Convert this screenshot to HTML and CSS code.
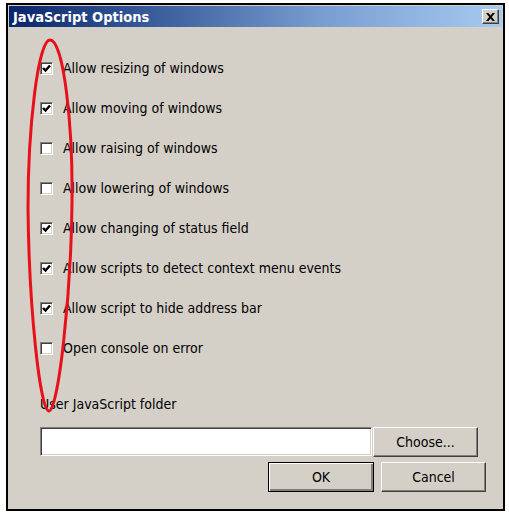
FILE: index.html
```html
<!DOCTYPE html>
<html lang="en">
<head>
  <meta charset="UTF-8">
  <title>JavaScript Options</title>
  <link rel="stylesheet" href="styles.css">
</head>
<body>

  <div class="dialog">
    <div class="titlebar">
      <span class="title">JavaScript Options</span>
      <button class="close" aria-label="Close">
        <svg width="9" height="8" viewBox="0 0 9 8">
          <path d="M0 0h2.5l2 2.6L6.5 0H9L5.8 4 9 8H6.5l-2-2.6L2.5 8H0l3.2-4z" fill="#000"/>
        </svg>
      </button>
    </div>

    <div class="content">
      <div class="options">
        <label class="option"><span class="box"><svg class="tick" width="9" height="9" viewBox="0 0 9 9"><path d="M1 4l2.5 2.5L8 1.5" fill="none" stroke="#000" stroke-width="2.4"/></svg></span>Allow resizing of windows</label>
        <label class="option"><span class="box"><svg class="tick" width="9" height="9" viewBox="0 0 9 9"><path d="M1 4l2.5 2.5L8 1.5" fill="none" stroke="#000" stroke-width="2.4"/></svg></span>Allow moving of windows</label>
        <label class="option"><span class="box"></span>Allow raising of windows</label>
        <label class="option"><span class="box"></span>Allow lowering of windows</label>
        <label class="option"><span class="box"><svg class="tick" width="9" height="9" viewBox="0 0 9 9"><path d="M1 4l2.5 2.5L8 1.5" fill="none" stroke="#000" stroke-width="2.4"/></svg></span>Allow changing of status field</label>
        <label class="option"><span class="box"><svg class="tick" width="9" height="9" viewBox="0 0 9 9"><path d="M1 4l2.5 2.5L8 1.5" fill="none" stroke="#000" stroke-width="2.4"/></svg></span>Allow scripts to detect context menu events</label>
        <label class="option"><span class="box"><svg class="tick" width="9" height="9" viewBox="0 0 9 9"><path d="M1 4l2.5 2.5L8 1.5" fill="none" stroke="#000" stroke-width="2.4"/></svg></span>Allow script to hide address bar</label>
        <label class="option"><span class="box"></span>Open console on error</label>
      </div>

      <div class="folder-label">User JavaScript folder</div>
      <div class="folder-row">
        <div class="field"></div>
        <button class="btn choose">Choose...</button>
      </div>

      <div class="actions">
        <button class="btn default">OK</button>
        <button class="btn">Cancel</button>
      </div>
    </div>

    <!-- red marker drawn over the checkbox column -->
    <svg class="marker" width="80" height="400" viewBox="0 0 80 400">
      <path d="M42 2 C56 2 65 90 64 165 C63 260 50 373 41 373 C32 373 21 270 20 170 C20 90 30 2 42 2 Z"
            fill="none" stroke="#e8101a" stroke-width="3"/>
    </svg>
  </div>

</body>
</html>
```

FILE: styles.css
```css
body {
  margin: 0;
  background-color: #fff;
  font-family: "DejaVu Sans Condensed", "DejaVu Sans", sans-serif;
  font-stretch: condensed;
}

.dialog {
  position: relative;
  margin: 3px 0 0 6px;
  width: 499px;
  height: 508px;
  box-sizing: border-box;
  border: 2px solid #000;
  background-color: #d4d0c8;
  padding: 1px;
}

.titlebar {
  height: 21px;
  display: flex;
  align-items: center;
  justify-content: space-between;
  padding: 0 3px 0 4px;
  background: linear-gradient(to right, #0a246a, #3b5e9c 30%, #7c9fd3 65%, #a6caf0);
}

.title {
  color: #fff;
  font-weight: bold;
  font-size: 14.5px;
}

.close {
  width: 17px;
  height: 15px;
  padding: 0;
  display: flex;
  align-items: center;
  justify-content: center;
  background-color: #d4d0c8;
  border: 1px solid;
  border-color: #fff #404040 #404040 #fff;
  box-shadow: inset -1px -1px 0 #808080;
}

.content {
  padding: 21px 0 0 31px;
}

.option {
  height: 40px;
  display: flex;
  align-items: center;
  gap: 10px;
  font-size: 14px;
  color: #000;
}

.box {
  width: 13px;
  height: 13px;
  box-sizing: border-box;
  background-color: #fff;
  border: 1px solid;
  border-color: #808080 #fff #fff #808080;
  box-shadow: inset 1px 1px 0 #404040, inset -1px -1px 0 #d4d0c8;
  display: flex;
  align-items: center;
  justify-content: center;
}

.folder-label {
  margin-top: 28px;
  font-size: 14px;
  line-height: 16px;
}

.folder-row {
  display: flex;
  align-items: flex-start;
  gap: 1px;
  margin-top: 15px;
}

.field {
  width: 332px;
  height: 29px;
  box-sizing: border-box;
  background-color: #fff;
  border: 1px solid;
  border-color: #808080 #fff #fff #808080;
  box-shadow: inset 1px 1px 0 #404040, inset -1px -1px 0 #d4d0c8;
}

.btn {
  width: 105px;
  height: 30px;
  font-family: inherit;
  font-stretch: condensed;
  font-size: 14px;
  color: #000;
  background-color: #d4d0c8;
  border: 1px solid;
  border-color: #fff #404040 #404040 #fff;
  box-shadow: inset -1px -1px 0 #808080;
  padding: 0;
}

.actions {
  display: flex;
  gap: 7px;
  margin: 5px 0 0 228px;
}

.btn.default {
  width: 106px;
  border: 1px solid #000;
  box-shadow: inset 1px 1px 0 #fff, inset -2px -2px 0 #808080;
}

.marker {
  position: absolute;
  left: 0;
  top: 33px;
  pointer-events: none;
}
```
